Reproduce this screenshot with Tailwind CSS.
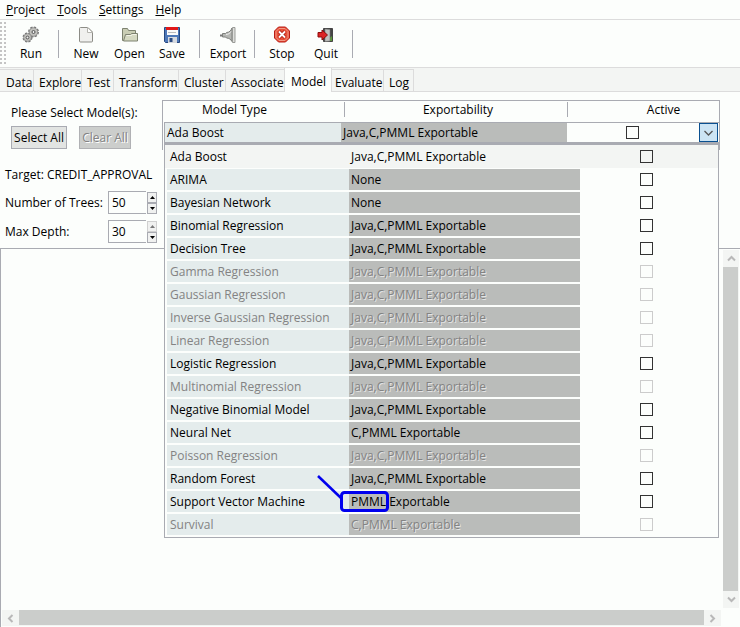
<!DOCTYPE html>
<html lang="en">
<head>
<meta charset="utf-8">
<title>Model</title>
<script src="https://cdn.jsdelivr.net/npm/@tailwindcss/browser@4"></script>
</head>
<body class="flex flex-col h-screen overflow-hidden bg-[#fcfefc] text-black text-[12px] leading-4 font-['Open_Sans','Noto_Sans',sans-serif]">

<nav class="flex h-5 shrink-0 items-center gap-3 border-b border-[#dcdcdc] pl-[6px]">
  <a href="#"><u>P</u>roject</a>
  <a href="#"><u>T</u>ools</a>
  <a href="#"><u>S</u>ettings</a>
  <a href="#"><u>H</u>elp</a>
</nav>

<div role="toolbar" class="flex h-12 shrink-0 border-b border-[#dcdcdc]">
  <div class="w-2 shrink-0 mt-[2px] mb-[1px] bg-[radial-gradient(circle_at_1px_1px,#c4c4c4_1px,transparent_1px)] bg-[size:4px_4px]"></div>
  <button class="flex w-[46px] flex-col items-center gap-[3px] pt-[6px]">
    <svg width="18" height="17" viewBox="0 0 18 17"><g fill="#b4b4b0" stroke="#777"><circle cx="11.500" cy="6" r="4.500" stroke-dasharray="2.200 1.300" stroke-width="2"/><circle cx="5.500" cy="11.500" r="4" stroke-dasharray="2 1.200" stroke-width="2"/></g><circle cx="11.500" cy="6" r="4.200" fill="#c0c0bc" stroke="#888" stroke-width=".6"/><circle cx="5.500" cy="11.500" r="3.800" fill="#c0c0bc" stroke="#888" stroke-width=".6"/><circle cx="11.500" cy="6" r="1.500" fill="#eee" stroke="#555"/><circle cx="5.500" cy="11.500" r="1.400" fill="#eee" stroke="#555"/></svg>
    <span>Run</span>
  </button>
  <div class="ml-1 mt-[10px] h-7 w-px bg-[#a9abb2]"></div>
  <button class="ml-[5px] flex w-11 flex-col items-center gap-[3px] pt-[6px]">
    <svg width="16" height="17" viewBox="0 0 16 17"><path d="M1.500 2.500q0-1 1-1h7.500l4.500 4.500v9q0 1-1 1h-11q-1 0-1-1z" fill="#f0f0ee" stroke="#8c8c86"/><path d="M9.500 1.500v5h5z" fill="#fff" stroke="#b5b5af"/></svg>
    <span>New</span>
  </button>
  <button class="flex w-[43px] flex-col items-center gap-[3px] pt-[6px]">
    <svg width="18" height="17" viewBox="0 0 18 17"><path d="M1.500 14.500v-12h5l1 2h7v10z" fill="#c9cdb4" stroke="#7d8270"/><path d="M4.500 8.500h5l1-1h6v7.500h-14z" fill="#d5d9c2" stroke="#7d8270"/><path d="M5.500 9.500h5l1-1h4" fill="none" stroke="#f2f3e8"/></svg>
    <span>Open</span>
  </button>
  <button class="flex w-[42px] flex-col items-center gap-[3px] pt-[6px]">
    <svg width="16" height="17" viewBox="0 0 16 17"><path d="M.500 1.500h15v15h-14l-1-1z" fill="#4d78b8" stroke="#25477f"/><path d="M3 1h11v8H3z" fill="#fafafa"/><path d="M2 1h12v3H2z" fill="#e01818"/><path d="M4 6.500h8" stroke="#bbb"/><path d="M4 11h9v6H4z" fill="#d5d9df"/><path d="M5.500 12h3v4h-3z" fill="#2a4a80"/></svg>
    <span>Save</span>
  </button>
  <div class="ml-[6px] mt-[10px] h-7 w-px bg-[#a9abb2]"></div>
  <button class="ml-[5px] flex w-[46px] flex-col items-center gap-[3px] pt-[6px]">
    <svg width="18" height="17" viewBox="0 0 18 17"><path d="M1 9.500h3" stroke="#777" stroke-width="2"/><path d="M3.500 7.500h3l1-1c3 0 4.500-2 5.500-4.500v13.500c-1-2-3-3.500-5.500-3.500l-1-1h-3z" fill="#b5b7b3" stroke="#7d7f7b"/><path d="M7 8.500c2.500 0 4-1.500 5-3" stroke="#eee" fill="none"/><path d="M13.500 1.500h2.500v15h-2.500z" fill="#dedfdc" stroke="#999b97"/></svg>
    <span>Export</span>
  </button>
  <div class="ml-[3px] mt-[10px] h-7 w-px bg-[#a9abb2]"></div>
  <button class="ml-[5px] flex w-11 flex-col items-center gap-[3px] pt-[6px]">
    <svg width="18" height="17" viewBox="0 0 18 17"><path d="M5.500 1h7l4 4v7l-4 4h-7l-4-4v-7z" fill="#e85038" stroke="#b81c14"/><path d="M6 2.500h6l3 3v6l-3 3H6l-3-3v-6z" fill="none" stroke="#f29a86"/><path d="M6 5.500l6 6M12 5.500l-6 6" stroke="#a81810" stroke-width="3.400"/><path d="M6 5.500l6 6M12 5.500l-6 6" stroke="#fff" stroke-width="1.800"/></svg>
    <span>Stop</span>
  </button>
  <button class="flex w-11 flex-col items-center gap-[3px] pt-[6px]">
    <svg width="18" height="17" viewBox="0 0 18 17"><path d="M6.500 2.500h9v13h-9z" fill="#444" stroke="#444"/><path d="M12.500 15v-3l2.500-2v5z" fill="#5a9a38"/><path d="M8 3l5 .5v11.500l-5 .5z" fill="#bfc1be" stroke="#777" stroke-width=".6"/><path d="M1 6.500h4v-2.500l5.500 5-5.500 5v-3H1z" fill="#dc2424" stroke="#8c0c0c"/></svg>
    <span>Quit</span>
  </button>
  <div class="ml-[4px] mt-[10px] h-7 w-px bg-[#a9abb2]"></div>
</div>

<div role="tablist" class="flex h-6 shrink-0 items-end border-b border-[#dcdcdc] bg-[#f3f5f3] whitespace-nowrap">
  <button role="tab" class="h-[22px] w-[34px] border-t border-r border-[#dcdcdc] pt-1 pl-[6px] text-left">Data</button>
  <button role="tab" class="h-[22px] w-12 border-t border-r border-[#dcdcdc] pt-1 pl-[5px] text-left">Explore</button>
  <button role="tab" class="h-[22px] w-8 border-t border-r border-[#dcdcdc] pt-1 pl-[5px] text-left">Test</button>
  <button role="tab" class="h-[22px] w-[65px] border-t border-r border-[#dcdcdc] pt-1 pl-[5px] text-left">Transform</button>
  <button role="tab" class="h-[22px] w-[47px] border-t border-r border-[#dcdcdc] pt-1 pl-[5px] text-left">Cluster</button>
  <button role="tab" class="h-[22px] w-[58px] border-t border-[#dcdcdc] pt-1 pl-[5px] text-left">Associate</button>
  <button role="tab" aria-selected="true" class="z-10 -mb-px h-6 w-[48px] border-x border-[#dcdcdc] bg-[#fcfefc] pt-1 pl-[6px] text-left">Model</button>
  <button role="tab" class="h-[22px] w-[52px] border-t border-r border-[#dcdcdc] pt-1 pl-[3px] text-left">Evaluate</button>
  <button role="tab" class="h-[22px] w-[30px] border-t border-r border-[#dcdcdc] pt-1 pl-[5px] text-left">Log</button>
</div>

<section class="flex h-[156px] shrink-0 pr-[21px] whitespace-nowrap">
  <form class="w-[162px] shrink-0 pt-[13px] pl-[5px]">
    <p class="pl-[6px]">Please Select Model(s):</p>
    <div class="mt-[5px] flex gap-3 pl-[6px]">
      <button type="button" class="h-[23px] w-14 border border-[#a9abb2] bg-[#e2e4e2]">Select All</button>
      <button type="button" disabled class="h-[23px] w-[52px] border border-[#b0b1b4] bg-[#cccecc] text-[#838383] text-shadow-[1px_1px_0_#fff]">Clear All</button>
    </div>
    <p class="mt-[18px]">Target: CREDIT_APPROVAL</p>
    <div class="mt-2 flex h-[23px] items-center">
      <label for="trees" class="w-[103px]">Number of Trees:</label>
      <input id="trees" value="50" class="h-[23px] w-[38px] border border-r-0 border-[#a9abb2] pl-[3px]">
      <div class="ml-px flex flex-col">
        <button type="button" aria-label="More trees" class="flex h-[11px] w-[10px] items-center justify-center border border-[#a9abb2] bg-[#f0f1f0]"><svg width="5" height="3"><path d="M0 3L2.500 0 5 3z"/></svg></button>
        <button type="button" aria-label="Fewer trees" class="flex h-[11px] w-[10px] items-center justify-center border border-[#a9abb2] bg-[#f0f1f0]"><svg width="5" height="3"><path d="M0 0L2.500 3 5 0z"/></svg></button>
      </div>
    </div>
    <div class="mt-[6px] flex h-[23px] items-center">
      <label for="depth" class="w-[103px]">Max Depth:</label>
      <input id="depth" value="30" class="h-[23px] w-[38px] border border-r-0 border-[#a9abb2] pl-[3px]">
      <div class="ml-px flex flex-col">
        <button type="button" disabled aria-label="Deeper" class="flex h-[11px] w-[10px] items-center justify-center border border-[#d0d0d0] bg-[#f0f1f0]"><svg width="5" height="3"><path d="M0 3L2.500 0 5 3z" fill="#777"/></svg></button>
        <button type="button" aria-label="Shallower" class="flex h-[11px] w-[10px] items-center justify-center border border-[#a9abb2] bg-[#f0f1f0]"><svg width="5" height="3"><path d="M0 0L2.500 3 5 0z"/></svg></button>
      </div>
    </div>
  </form>

  <div class="mt-2 -mr-px h-[50px] flex-1 border border-b-0 border-[#a9abb2]">
    <div class="flex h-[21px] items-start text-center leading-[18px]">
      <div class="w-[181px] shrink-0 pr-[38px]">Model Type</div>
      <div class="mt-[1px] h-[15px] w-px bg-[#a9abb2]"></div>
      <div class="w-[222px] shrink-0 pl-1">Exportability</div>
      <div class="mt-[1px] h-[15px] w-px bg-[#a9abb2]"></div>
      <div class="flex-1 pl-10">Active</div>
    </div>
    <div class="relative z-10 ml-px">
      <div class="flex h-[22px] border-t border-b-2 border-[#a9abb2] border-l leading-5 pr-px">
        <div class="w-[176px] shrink-0 bg-[#e4ecec] pl-[2px]">Ada Boost</div>
        <div class="w-[226px] shrink-0 bg-[#babcba] pl-[2px]">Java,C,PMML Exportable</div>
        <div class="flex flex-1 items-center pl-[59px]"><input type="checkbox" aria-label="Ada Boost active" class="h-[13px] w-[13px] appearance-none border border-[#333]"></div>
        <button aria-label="Show models" class="flex w-[19px] items-center justify-center border border-[#0a5090] bg-[#cce4f4]"><svg width="9" height="6" fill="none"><path d="M.500 1l4 4 4-4" stroke="#555" stroke-width="1.300"/></svg></button>
      </div>
      <div class="absolute top-[22px] right-0 left-0 h-[394px] border border-[#a9abb2] bg-[#fcfefc]">
        <table class="w-full table-fixed border-collapse">
          <colgroup><col class="w-[184px]"><col class="w-[231px]"><col></colgroup>
          <tbody id="models"></tbody>
        </table>
        <svg class="absolute left-[150px] top-[328px]" width="80" height="42" fill="none" stroke="#0000ee" stroke-width="3"><path d="M3 3L26 25" stroke-width="2.500"/><rect x="26.500" y="19.500" width="46" height="18" rx="3"/></svg>
      </div>
    </div>
  </div>
</section>

<main class="flex min-h-0 flex-1 flex-col border-t border-l border-[#a9abb2] pl-px pt-px pb-[1px]">
  <div class="flex min-h-0 flex-1">
    <div class="flex-1"></div>
    <div class="mr-[1px] flex w-4 flex-col bg-[#f3f5f3]">
      <button aria-label="Scroll up" class="flex h-[17px] items-center justify-center"><svg width="9" height="7" fill="none"><path d="M1 5.500l3.500-3.500L8 5.500" stroke="#b8b8b8" stroke-width="2"/></svg></button>
      <div class="mr-px flex-1 bg-[#cbcdcb]"></div>
      <button aria-label="Scroll down" class="flex h-[17px] items-center justify-center"><svg width="9" height="7" fill="none"><path d="M1 1.500l3.500 3.500L8 1.500" stroke="#b8b8b8" stroke-width="2"/></svg></button>
    </div>
  </div>
  <div class="mt-[2px] mr-[19px] flex h-4 bg-[#f3f5f3]">
    <button aria-label="Scroll left" class="flex w-[17px] items-center justify-center"><svg width="7" height="9" fill="none"><path d="M5.500 1L2 4.500 5.500 8" stroke="#b8b8b8" stroke-width="2"/></svg></button>
    <div class="mb-px flex-1 bg-[#cbcdcb]"></div>
    <button aria-label="Scroll right" class="flex w-[17px] items-center justify-center"><svg width="7" height="9" fill="none"><path d="M1.500 1L5 4.500 1.500 8" stroke="#b8b8b8" stroke-width="2"/></svg></button>
  </div>
</main>

<script>
const all = 'Java,C,PMML Exportable';
const models = [
  ['Ada Boost', all, 1], ['ARIMA', 'None', 1], ['Bayesian Network', 'None', 1],
  ['Binomial Regression', all, 1], ['Decision Tree', all, 1], ['Gamma Regression', all, 0],
  ['Gaussian Regression', all, 0], ['Inverse Gaussian Regression', all, 0], ['Linear Regression', all, 0],
  ['Logistic Regression', all, 1], ['Multinomial Regression', all, 0], ['Negative Binomial Model', all, 1],
  ['Neural Net', 'C,PMML Exportable', 1], ['Poisson Regression', all, 0], ['Random Forest', all, 1],
  ['Support Vector Machine', 'PMML Exportable', 1], ['Survival', 'C,PMML Exportable', 0]
];
document.getElementById('models').innerHTML = models.map(([name, exp, on], i) => `
  <tr class="${i === 0 ? 'h-[23px] bg-[#f3f5f3]' : on ? 'h-[23px]' : 'h-[23px] text-[#838383]'}">
    <td class="p-0 pl-[2px]"><label for="m${i}" class="${i === 0 ? 'block h-[21px] pl-[3px] leading-[21px]' : 'block h-[21px] bg-[#e4ecec] pl-[3px] leading-[21px]'}">${name}</label></td>
    <td class="p-0"><div class="${i === 0 ? 'h-[21px] pl-[2px] leading-[21px]' : on ? 'h-[21px] bg-[#babcba] pl-[2px] leading-[21px]' : 'h-[21px] bg-[#babcba] pl-[2px] leading-[21px] text-shadow-[1px_1px_0_#e4e4e4]'}">${exp}</div></td>
    <td class="p-0 pl-[60px]"><input id="m${i}" type="checkbox" ${on ? '' : 'disabled'} class="${on ? 'block h-[13px] w-[13px] appearance-none border border-[#333]' : 'block h-[13px] w-[13px] appearance-none border border-[#ccc]'}"></td>
  </tr>`).join('');
</script>
</body>
</html>
